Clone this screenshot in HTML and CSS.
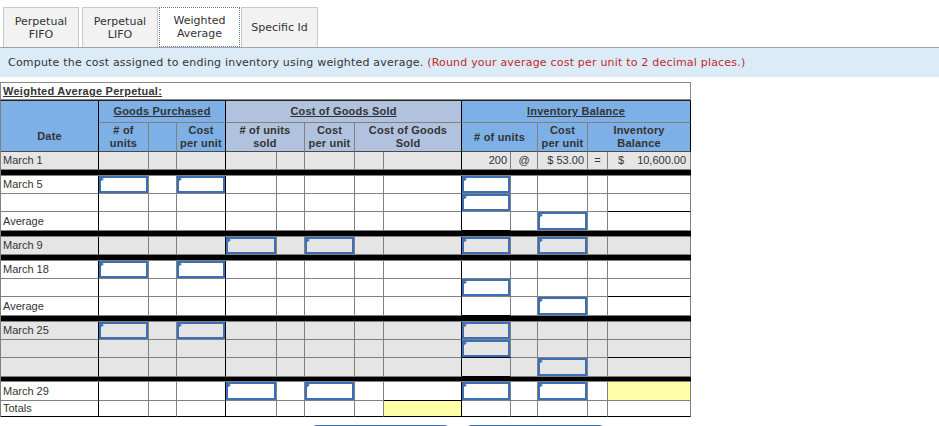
FILE: index.html
```html
<!DOCTYPE html>
<html lang="en">
<head>
<meta charset="utf-8">
<title>Weighted Average Perpetual</title>
<link rel="stylesheet" href="styles.css">
</head>
<body>
<div class="tabs">
  <div class="tab tab1">Perpetual<br>FIFO</div>
  <div class="tab tab2">Perpetual<br>LIFO</div>
  <div class="tab tab3 active">Weighted<br>Average</div>
  <div class="tab tab4">Specific Id</div>
</div>
<div class="prompt">Compute the cost assigned to ending inventory using weighted average. <span class="note">(Round your average cost per unit to 2 decimal places.)</span></div>

<div class="ttl">Weighted Average Perpetual:</div>
<table class="sheet">
  <colgroup>
    <col class="w1"><col class="w2"><col class="w3"><col class="w4"><col class="w5"><col class="w6"><col class="w7"><col class="w8"><col class="w9"><col class="w10"><col class="w11"><col class="w12"><col class="w13"><col class="w14">
  </colgroup>
  <thead>
    <tr class="hr1">
      <td class="hd blue k low date" rowspan="2">Date</td>
      <td class="hd blue k" colspan="3"><u>Goods Purchased</u></td>
      <td class="hd slate k" colspan="5"><u>Cost of Goods Sold</u></td>
      <td class="hd blue k" colspan="5"><u>Inventory Balance</u></td>
    </tr>
    <tr class="hr2">
      <td class="hd blue low"># of<br>units</td>
      <td class="hd blue low"></td>
      <td class="hd blue k low">Cost<br>per unit</td>
      <td class="hd slate low" colspan="2"># of units<br>sold</td>
      <td class="hd slate low">Cost<br>per unit</td>
      <td class="hd slate k low" colspan="2">Cost of Goods<br>Sold</td>
      <td class="hd blue low" colspan="2"># of units</td>
      <td class="hd blue low">Cost<br>per unit</td>
      <td class="hd blue k low" colspan="2">Inventory<br>Balance</td>
    </tr>
  </thead>
  <tbody>
    <tr class="g h18">
      <td class="lbl">March 1</td><td></td><td></td><td></td><td></td><td></td><td></td><td></td><td></td>
      <td class="num">200</td><td class="mid">@</td><td class="num">$ 53.00</td><td class="mid">=</td><td class="num bal"><span class="cur">$</span>10,600.00</td>
    </tr>
    <tr class="sep"><td colspan="14"></td></tr>

    <tr class="h18">
      <td class="lbl">March 5</td><td class="in"><span class="inp"></span></td><td></td><td class="in"><span class="inp"></span></td><td></td><td></td><td></td><td></td><td></td>
      <td class="in"><span class="inp"></span></td><td></td><td></td><td></td><td></td>
    </tr>
    <tr class="h18">
      <td class="lbl"></td><td></td><td></td><td></td><td></td><td></td><td></td><td></td><td></td>
      <td class="in"><span class="inp"></span></td><td></td><td></td><td></td><td class="bb"></td>
    </tr>
    <tr class="h19">
      <td class="lbl">Average</td><td></td><td></td><td></td><td></td><td></td><td></td><td></td><td></td>
      <td class="bb"></td><td></td><td class="in"><span class="inp"></span></td><td></td><td></td>
    </tr>
    <tr class="sep"><td colspan="14"></td></tr>

    <tr class="g h18">
      <td class="lbl">March 9</td><td></td><td></td><td></td><td class="in"><span class="inp"></span></td><td></td><td class="in"><span class="inp"></span></td><td></td><td></td>
      <td class="in"><span class="inp"></span></td><td></td><td class="in"><span class="inp"></span></td><td></td><td></td>
    </tr>
    <tr class="sep"><td colspan="14"></td></tr>

    <tr class="h18">
      <td class="lbl">March 18</td><td class="in"><span class="inp"></span></td><td></td><td class="in"><span class="inp"></span></td><td></td><td></td><td></td><td></td><td></td>
      <td></td><td></td><td></td><td></td><td></td>
    </tr>
    <tr class="h18">
      <td class="lbl"></td><td></td><td></td><td></td><td></td><td></td><td></td><td></td><td></td>
      <td class="in"><span class="inp"></span></td><td></td><td></td><td></td><td class="bb"></td>
    </tr>
    <tr class="h19">
      <td class="lbl">Average</td><td></td><td></td><td></td><td></td><td></td><td></td><td></td><td></td>
      <td class="bb"></td><td></td><td class="in"><span class="inp"></span></td><td></td><td></td>
    </tr>
    <tr class="sep"><td colspan="14"></td></tr>

    <tr class="g h18">
      <td class="lbl">March 25</td><td class="in"><span class="inp"></span></td><td></td><td class="in"><span class="inp"></span></td><td></td><td></td><td></td><td></td><td></td>
      <td class="in"><span class="inp"></span></td><td></td><td></td><td></td><td></td>
    </tr>
    <tr class="g h18">
      <td class="lbl"></td><td></td><td></td><td></td><td></td><td></td><td></td><td></td><td></td>
      <td class="in bb"><span class="inp"></span></td><td></td><td></td><td></td><td class="bb"></td>
    </tr>
    <tr class="g h19">
      <td class="lbl"></td><td></td><td></td><td></td><td></td><td></td><td></td><td></td><td></td>
      <td class="bb"></td><td></td><td class="in"><span class="inp"></span></td><td></td><td></td>
    </tr>
    <tr class="sep sep5"><td colspan="14"></td></tr>

    <tr class="h19">
      <td class="lbl">March 29</td><td></td><td></td><td></td><td class="in"><span class="inp"></span></td><td></td><td class="in"><span class="inp"></span></td><td></td><td class="bb"></td>
      <td class="in"><span class="inp"></span></td><td></td><td class="in"><span class="inp"></span></td><td></td><td class="yel"></td>
    </tr>
    <tr class="h16 last">
      <td class="lbl">Totals</td><td></td><td></td><td></td><td></td><td></td><td></td><td></td><td class="yel"></td>
      <td></td><td></td><td></td><td></td><td></td>
    </tr>
  </tbody>
</table>
<div class="actions">
  <button class="btn" type="button"></button>
  <button class="btn" type="button"></button>
</div>
</body>
</html>
```
FILE: styles.css
```css
* { box-sizing: border-box; }

body {
  margin: 0;
  background: #fff;
  color: #333;
  font-family: "DejaVu Sans", Verdana, sans-serif;
}

/* tabs */
.tabs {
  display: flex;
  gap: 3px;
  padding: 7px 0 0 3px;
  height: 47px;
}
.tab {
  height: 40px;
  border: 1px solid #c9c9c9;
  border-bottom: none;
  background: #f2f2f2;
  font-size: 11px;
  line-height: 13px;
  color: #333;
  display: flex;
  align-items: center;
  justify-content: center;
  text-align: center;
}
.tab1 { width: 76px; }
.tab2 { width: 76px; }
.tab3 { width: 81px; margin: 0 -2px; }
.tab4 { width: 77px; }
.tab.active {
  background: #fff;
  border: 1px dotted #5a7fb0;
}

/* instruction band */
.prompt {
  height: 30px;
  border-top: 1px solid #a3a3a3;
  background: #dbecf8;
  padding-left: 8px;
  font-size: 11px;
  line-height: 29px;
  letter-spacing: 0.2px;
  color: #333;
  margin-bottom: 5px;
  white-space: nowrap;
}
.note { color: #c0282d; }

/* title */
.ttl {
  width: 691px;
  height: 18px;
  border: 1px solid #8a8a8a;
  padding-left: 2px;
  font: bold 11px/16px "Liberation Sans", Arial, sans-serif;
  letter-spacing: 0.27px;
  color: #333;
  text-decoration: underline;
}

/* worksheet */
.sheet {
  border-collapse: separate;
  border-spacing: 0;
  table-layout: fixed;
  width: 691px;
  border-left: 1px solid #808080;
  border-top: 1px solid #222;
  font: 11px/13px "Liberation Sans", Arial, sans-serif;
  color: #333;
}
.w1 { width: 98px; }
.w2 { width: 50px; }
.w3 { width: 28px; }
.w4 { width: 49px; }
.w5 { width: 51px; }
.w6 { width: 28px; }
.w7 { width: 50px; }
.w8 { width: 29px; }
.w9 { width: 78px; }
.w10 { width: 49px; }
.w11 { width: 27px; }
.w12 { width: 50px; }
.w13 { width: 20px; }
.w14 { width: 83px; }

.sheet td {
  border-right: 1px solid #808080;
  border-bottom: 1px solid #808080;
  padding: 0 2px;
  overflow: hidden;
  white-space: nowrap;
  vertical-align: middle;
}
.sheet tbody td:nth-child(1),
.sheet tbody td:nth-child(4),
.sheet tbody td:nth-child(9) {
  border-right-color: #000;
}
.sheet td.k { border-right-color: #000; }
.sheet td.bb { border-bottom-color: #000; }

.hr1 { height: 22px; }
.hr2 { height: 29px; }
.hd {
  font-weight: bold;
  text-align: center;
  padding: 0;
  color: #333;
  letter-spacing: 0.2px;
}
.hd u { text-decoration: underline; }
.sheet td.date {
  vertical-align: bottom;
  padding-bottom: 8px;
}
.blue { background: #7cb0e6; }
.slate { background: #b0c2de; }
.sheet td.low { border-bottom-color: #4a4a4a; }

.h18 { height: 18px; }
.h19 { height: 19px; }
.h16 { height: 16px; }
.g td { background: #e5e5e5; }

.lbl { padding-left: 2px; }
.num { text-align: right; }
.sheet td.num { padding-right: 3px; }
.mid { text-align: center; }
.sheet td.mid { padding: 0; }
.sheet td.bal { padding-right: 4px; }
.cur { float: left; margin-left: 8px; }

.sep { height: 6px; }
.sep5 { height: 5px; }
.sheet .sep td {
  background: #000;
  border-right-color: #000;
  padding: 0;
}

.sheet td.in { padding: 0; }
.inp {
  display: block;
  position: relative;
  height: 17px;
  border: 2px solid #3b6fb6;
}
.h19 .inp { height: 18px; }
.inp::before {
  content: "";
  position: absolute;
  top: -1px;
  left: -1px;
  width: 0;
  height: 0;
  border-left: 4px solid #3b6fb6;
  border-top: 2px solid transparent;
  border-bottom: 3px solid transparent;
}

.sheet td.yel { background: #ffffa8; }
.sheet .last td { border-bottom-color: #000; }
.sheet .last td.yel { border-right-color: #000; }

/* buttons below */
.actions {
  display: flex;
  gap: 18px;
  margin: 8px 0 0 312px;
}
.btn {
  width: 137px;
  height: 32px;
  border: 1px solid #3b6fb6;
  border-radius: 4px;
  background: #fff;
}
```
